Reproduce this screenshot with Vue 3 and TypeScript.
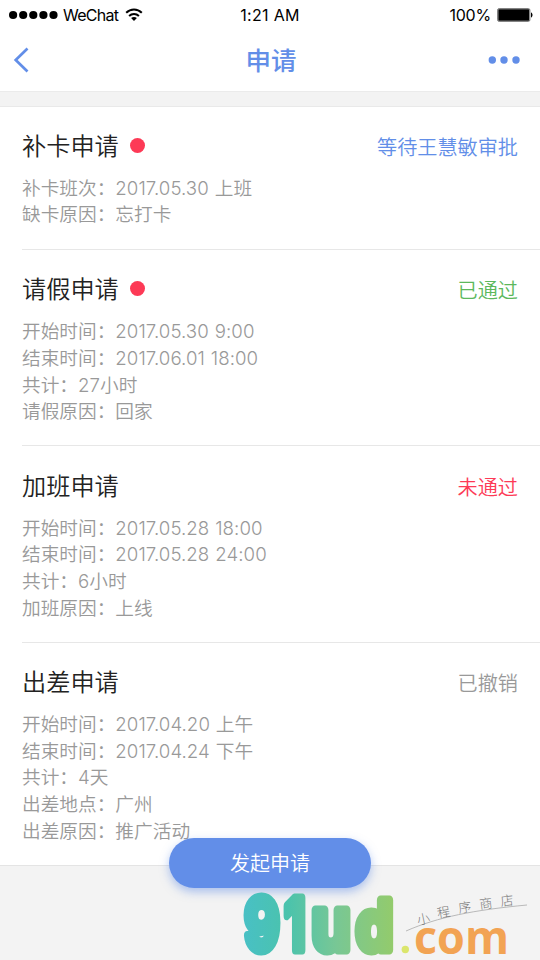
<script setup lang="ts">
interface Field {
  label: string
  value: string
}

interface Request {
  title: string
  unread: boolean
  status: string
  tone: 'pending' | 'passed' | 'rejected' | 'revoked'
  fields: Field[]
}

const requests: Request[] = [
  {
    title: '补卡申请',
    unread: true,
    status: '等待王慧敏审批',
    tone: 'pending',
    fields: [
      { label: '补卡班次', value: '2017.05.30 上班' },
      { label: '缺卡原因', value: '忘打卡' },
    ],
  },
  {
    title: '请假申请',
    unread: true,
    status: '已通过',
    tone: 'passed',
    fields: [
      { label: '开始时间', value: '2017.05.30 9:00' },
      { label: '结束时间', value: '2017.06.01 18:00' },
      { label: '共计', value: '27小时' },
      { label: '请假原因', value: '回家' },
    ],
  },
  {
    title: '加班申请',
    unread: false,
    status: '未通过',
    tone: 'rejected',
    fields: [
      { label: '开始时间', value: '2017.05.28 18:00' },
      { label: '结束时间', value: '2017.05.28 24:00' },
      { label: '共计', value: '6小时' },
      { label: '加班原因', value: '上线' },
    ],
  },
  {
    title: '出差申请',
    unread: false,
    status: '已撤销',
    tone: 'revoked',
    fields: [
      { label: '开始时间', value: '2017.04.20 上午' },
      { label: '结束时间', value: '2017.04.24 下午' },
      { label: '共计', value: '4天' },
      { label: '出差地点', value: '广州' },
      { label: '出差原因', value: '推广活动' },
    ],
  },
]
</script>

<template>
  <div class="screen">
    <header class="header">
      <div class="statusbar">
        <div class="carrier">
          <svg class="signal" width="50" height="10" viewBox="0 0 50 10">
            <circle v-for="n in 5" :key="n" :cx="n * 10.1 - 6" cy="5" r="4.1" />
          </svg>
          <span class="carrier-name">WeChat</span>
          <svg class="wifi" width="18" height="14" viewBox="0 0 18 14">
            <path d="M1.2 4.8C5.6.5 12.4.5 16.8 4.8M4.1 8C6.9 5.3 11.1 5.3 13.9 8" fill="none" stroke="#000" stroke-width="2" />
            <path d="M6.1 10C7.8 8.5 10.2 8.5 11.9 10L9 13Z" />
          </svg>
        </div>
        <span class="clock">1:21 AM</span>
        <div class="power">
          <span class="percent">100%</span>
          <svg class="battery" width="36" height="14" viewBox="0 0 36 14">
            <rect x=".6" y=".6" width="32.3" height="12.8" rx="1.5" fill="#fff" stroke="#777" stroke-width="1" />
            <rect x="1.3" y="1.3" width="30.9" height="11.4" rx=".6" />
            <path d="M34 4.5C36 5 36 9 34 9.5Z" />
          </svg>
        </div>
      </div>
      <nav class="navbar">
        <svg class="back" width="18" height="28" viewBox="0 0 18 28">
          <path d="M15.5 2.5 3.7 14 15.5 25.5" fill="none" stroke="#628ee8" stroke-width="2.7" />
        </svg>
        <h1>申请</h1>
        <svg class="more" width="32" height="8" viewBox="0 0 32 8">
          <circle cx="4.3" cy="4" r="3.7" /><circle cx="16" cy="4" r="3.7" /><circle cx="28" cy="4" r="3.7" />
        </svg>
      </nav>
    </header>

    <main class="list">
      <section v-for="item in requests" :key="item.title" class="item">
        <div class="item-head">
          <h2>{{ item.title }}</h2>
          <i v-if="item.unread" class="unread"></i>
          <span class="state" :class="item.tone">{{ item.status }}</span>
        </div>
        <p v-for="field in item.fields" :key="field.label">{{ field.label }}：<span class="value">{{ field.value }}</span></p>
      </section>
    </main>

    <button class="create" type="button">发起申请</button>

    <svg class="brand" width="300" height="74" viewBox="240 886 300 74">
      <defs>
        <linearGradient id="brand-fill" gradientUnits="userSpaceOnUse" x1="243" y1="0" x2="393" y2="0">
          <stop offset="0" stop-color="#48c0c5" />
          <stop offset=".3" stop-color="#4bc3ac" />
          <stop offset=".62" stop-color="#78c795" />
          <stop offset="1" stop-color="#93cb6c" />
        </linearGradient>
      </defs>
      <g class="brand-main" fill="url(#brand-fill)" stroke="url(#brand-fill)">
        <text x="244.5" y="949.5" textLength="35" lengthAdjust="spacingAndGlyphs">9</text>
        <text x="284.5" y="949.5" textLength="21" lengthAdjust="spacingAndGlyphs">1</text>
        <text class="brand-u" x="311.5" y="949.5" textLength="39" lengthAdjust="spacingAndGlyphs">u</text>
        <text class="brand-d" x="356" y="949.5" textLength="37" lengthAdjust="spacingAndGlyphs">d</text>
      </g>
      <circle cx="405.3" cy="949.5" r="3.7" fill="#dbe66c" />
      <text class="brand-domain" x="414" y="953.5" textLength="95" lengthAdjust="spacingAndGlyphs">com</text>
      <path d="M406 931C438 917 474 910 527 905" fill="none" stroke="#aaa" stroke-width=".8" />
      <g class="brand-tag">
        <text transform="translate(418 925) rotate(-12)">小</text>
        <text transform="translate(438 918) rotate(-10)">程</text>
        <text transform="translate(459 913) rotate(-8)">序</text>
        <text transform="translate(480 909) rotate(-7)">商</text>
        <text transform="translate(501 906) rotate(-6)">店</text>
      </g>
    </svg>
  </div>
</template>

<style>
body {
  background: #f3f3f3;
}
</style>

<style scoped>
.screen {
  position: relative;
  width: 540px;
  height: 960px;
  overflow: hidden;
  box-sizing: border-box;
  background: #f3f3f3;
  font-family: Inter, "Noto Sans CJK SC", sans-serif;
}

.header {
  height: 92px;
  box-sizing: border-box;
  border-bottom: 1px solid #ebebeb;
  background: #fff;
}

.statusbar {
  display: grid;
  grid-template-columns: 1fr auto 1fr;
  align-items: center;
  height: 30px;
  padding: 0 8px;
  font-size: 16px;
  line-height: 30px;
}

.carrier,
.power {
  display: flex;
  align-items: center;
}

.carrier {
  padding-left: 1px;
}

.carrier-name {
  margin-left: 4px;
  letter-spacing: -0.75px;
}

.wifi {
  margin-left: 7px;
}

.clock {
  letter-spacing: 0.3px;
}

.power {
  justify-content: flex-end;
  gap: 6px;
}

.percent {
  letter-spacing: -0.2px;
}

.battery {
  margin-right: -1px;
}

.navbar {
  display: grid;
  grid-template-columns: 1fr auto 1fr;
  align-items: center;
  height: 60px;
  padding: 0 12px;
}

h1 {
  margin: 0;
  padding: 2px 0 0 2px;
  color: #628ee8;
  font-size: 25.5px;
  font-weight: 500;
  line-height: 58px;
}

.more {
  justify-self: end;
  margin-right: 8px;
  fill: #628ee8;
}

.list {
  margin-top: 14px;
  border-top: 1px solid #e9e9e9;
  border-bottom: 1px solid #e4e4e4;
  background: #fff;
}

.item {
  margin-left: 22px;
  padding: 24.7px 0 20px;
}

.item + .item {
  padding: 25.2px 0 19.5px;
  border-top: 1px solid #e7e7e7;
}

.item-head {
  display: flex;
  align-items: center;
  height: 30px;
  margin-bottom: 14px;
  padding-right: 22px;
}

h2 {
  margin: 0;
  color: #222;
  font-size: 24.2px;
  font-weight: 350;
  line-height: 30px;
}

.unread {
  width: 15px;
  height: 15px;
  margin: 0 0 3px 11px;
  border-radius: 50%;
  background: #fd3a56;
}

.state {
  margin-left: auto;
  padding-top: 2px;
  font-size: 20.15px;
  font-weight: 350;
  line-height: 30px;
}

.pending {
  color: #628ee8;
}

.passed {
  color: #5cb85c;
}

.rejected {
  color: #fd3a56;
}

.revoked {
  color: #999;
}

.item p {
  margin: 0;
  color: #999;
  font-size: 18.67px;
  font-weight: 350;
  line-height: 26.667px;
}

.value {
  letter-spacing: 0.06px;
  word-spacing: 0.6px;
}

.create {
  position: absolute;
  left: 169px;
  top: 838px;
  width: 202px;
  height: 50px;
  padding: 2px 0 0;
  border: 0;
  border-radius: 25px;
  background: #628ee8;
  box-shadow: 0 4px 10px rgba(98, 142, 232, 0.5);
  color: #fff;
  font: 350 20px/48px Inter, "Noto Sans CJK SC", sans-serif;
}

.brand {
  position: absolute;
  right: 0;
  bottom: 0;
}

.brand-main {
  font-family: Inter, sans-serif;
  font-size: 71px;
  font-weight: 700;
  stroke-width: 9px;
  stroke-linejoin: round;
}

.brand-u {
  font-size: 74px;
}

.brand-d {
  font-size: 69px;
}

.brand-domain {
  fill: #f2a353;
  font-family: "Open Sans", sans-serif;
  font-size: 46px;
  font-weight: 700;
}

.brand-tag {
  fill: #777;
  font-size: 13px;
  font-weight: 300;
}
</style>
